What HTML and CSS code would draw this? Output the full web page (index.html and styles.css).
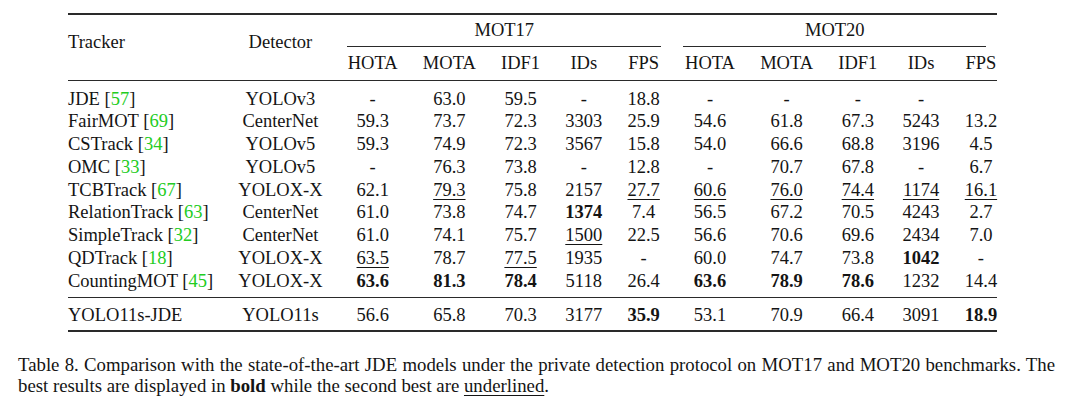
FILE: index.html
```html
<!DOCTYPE html>
<html lang="en">
<head>
<meta charset="utf-8">
<title>Table 8</title>
<link rel="stylesheet" href="styles.css">
</head>
<body>
<div class="page">
  <table class="results">
    <thead>
      <tr class="h1">
        <th class="name" rowspan="2">Tracker</th>
        <th class="det" rowspan="2">Detector</th>
        <th class="grp" colspan="5"><div class="grp-label g17">MOT17</div></th>
        <th class="grp" colspan="5"><div class="grp-label g20">MOT20</div></th>
      </tr>
      <tr class="h2">
        <th>HOTA</th><th>MOTA</th><th>IDF1</th><th>IDs</th><th>FPS</th>
        <th>HOTA</th><th>MOTA</th><th>IDF1</th><th>IDs</th><th class="last">FPS</th>
      </tr>
    </thead>
    <tbody class="prior">
      <tr class="first">
        <td class="name">JDE [<span class="cite">57</span>]</td><td>YOLOv3</td>
        <td>-</td><td>63.0</td><td>59.5</td><td>-</td><td>18.8</td>
        <td>-</td><td>-</td><td>-</td><td>-</td><td class="last"></td>
      </tr>
      <tr>
        <td class="name">FairMOT [<span class="cite">69</span>]</td><td>CenterNet</td>
        <td>59.3</td><td>73.7</td><td>72.3</td><td>3303</td><td>25.9</td>
        <td>54.6</td><td>61.8</td><td>67.3</td><td>5243</td><td class="last">13.2</td>
      </tr>
      <tr>
        <td class="name">CSTrack [<span class="cite">34</span>]</td><td>YOLOv5</td>
        <td>59.3</td><td>74.9</td><td>72.3</td><td>3567</td><td>15.8</td>
        <td>54.0</td><td>66.6</td><td>68.8</td><td>3196</td><td class="last">4.5</td>
      </tr>
      <tr>
        <td class="name">OMC [<span class="cite">33</span>]</td><td>YOLOv5</td>
        <td>-</td><td>76.3</td><td>73.8</td><td>-</td><td>12.8</td>
        <td>-</td><td>70.7</td><td>67.8</td><td>-</td><td class="last">6.7</td>
      </tr>
      <tr>
        <td class="name">TCBTrack [<span class="cite">67</span>]</td><td>YOLOX-X</td>
        <td>62.1</td><td><span class="u">79.3</span></td><td>75.8</td><td>2157</td><td><span class="u">27.7</span></td>
        <td><span class="u">60.6</span></td><td><span class="u">76.0</span></td><td><span class="u">74.4</span></td><td><span class="u">1174</span></td><td class="last"><span class="u">16.1</span></td>
      </tr>
      <tr>
        <td class="name">RelationTrack [<span class="cite">63</span>]</td><td>CenterNet</td>
        <td>61.0</td><td>73.8</td><td>74.7</td><td><b>1374</b></td><td>7.4</td>
        <td>56.5</td><td>67.2</td><td>70.5</td><td>4243</td><td class="last">2.7</td>
      </tr>
      <tr>
        <td class="name">SimpleTrack [<span class="cite">32</span>]</td><td>CenterNet</td>
        <td>61.0</td><td>74.1</td><td>75.7</td><td><span class="u">1500</span></td><td>22.5</td>
        <td>56.6</td><td>70.6</td><td>69.6</td><td>2434</td><td class="last">7.0</td>
      </tr>
      <tr>
        <td class="name">QDTrack [<span class="cite">18</span>]</td><td>YOLOX-X</td>
        <td><span class="u">63.5</span></td><td>78.7</td><td><span class="u">77.5</span></td><td>1935</td><td>-</td>
        <td>60.0</td><td>74.7</td><td>73.8</td><td><b>1042</b></td><td class="last">-</td>
      </tr>
      <tr class="lastrow">
        <td class="name">CountingMOT [<span class="cite">45</span>]</td><td>YOLOX-X</td>
        <td><b>63.6</b></td><td><b>81.3</b></td><td><b>78.4</b></td><td>5118</td><td>26.4</td>
        <td><b>63.6</b></td><td><b>78.9</b></td><td><b>78.6</b></td><td>1232</td><td class="last">14.4</td>
      </tr>
    </tbody>
    <tbody class="ours">
      <tr>
        <td class="name">YOLO11s-JDE</td><td>YOLO11s</td>
        <td>56.6</td><td>65.8</td><td>70.3</td><td>3177</td><td><b>35.9</b></td>
        <td>53.1</td><td>70.9</td><td>66.4</td><td>3091</td><td class="last"><b>18.9</b></td>
      </tr>
    </tbody>
  </table>
  <div class="caption">
    <p class="line full">Table 8. Comparison with the state-of-the-art JDE models under the private detection protocol on MOT17 and MOT20 benchmarks. The</p>
    <p class="line">best results are displayed in <b>bold</b> while the second best are <span class="u">underlined</span>.</p>
  </div>
</div>
</body>
</html>
```

FILE: styles.css
```css
html, body {
  margin: 0;
  padding: 0;
  background: #ffffff;
}

body {
  font-family: "Liberation Serif", "Times New Roman", serif;
  color: #141414;
}

.page {
  width: 1080px;
  height: 402px;
  overflow: hidden;
}

.results {
  margin: 13px 0 0 68px;
  border-collapse: separate;
  border-spacing: 0;
  border-top: 2px solid #2a2a2a;
  border-bottom: 2px solid #2a2a2a;
  font-size: 18.5px;
}

.results th,
.results td {
  padding: 0 12.6px;
  text-align: center;
  font-weight: normal;
  white-space: nowrap;
  vertical-align: top;
}

.results .name {
  text-align: left;
  padding-left: 0;
}

.results .last {
  padding-right: 0;
}

/* header */
.h1 .name,
.h1 .det {
  padding-top: 15.6px;
  line-height: 22.75px;
  border-bottom: 1px solid #2a2a2a;
}

.h1 .grp {
  padding: 0;
}

.grp-label {
  line-height: 31px;
  border-bottom: 1px solid #2a2a2a;
}

.g17 {
  margin: 0 11px 0 12px;
}

.g20 {
  margin: 0 11px;
}

.h2 th {
  line-height: 33px;
  border-bottom: 1px solid #2a2a2a;
}

/* body */
.results td {
  line-height: 22.75px;
}

.prior .first td {
  padding-top: 6.5px;
}

.prior .lastrow td {
  padding-bottom: 5px;
}

.ours td {
  border-top: 1px solid #2a2a2a;
  padding-top: 6px;
  padding-bottom: 3px;
}

.cite {
  color: #22cc22;
}

.u {
  text-decoration: underline;
  text-decoration-thickness: 1px;
  text-underline-offset: 3px;
}

b {
  font-weight: bold;
}

/* caption */
.caption {
  margin: 21.5px 0 0 18px;
  width: 1037px;
  font-size: 18.8px;
  line-height: 21px;
}

.caption .line {
  margin: 0;
  white-space: nowrap;
}

.caption .full {
  white-space: normal;
  word-spacing: -2px;
  text-align: justify;
  text-align-last: justify;
}
```
